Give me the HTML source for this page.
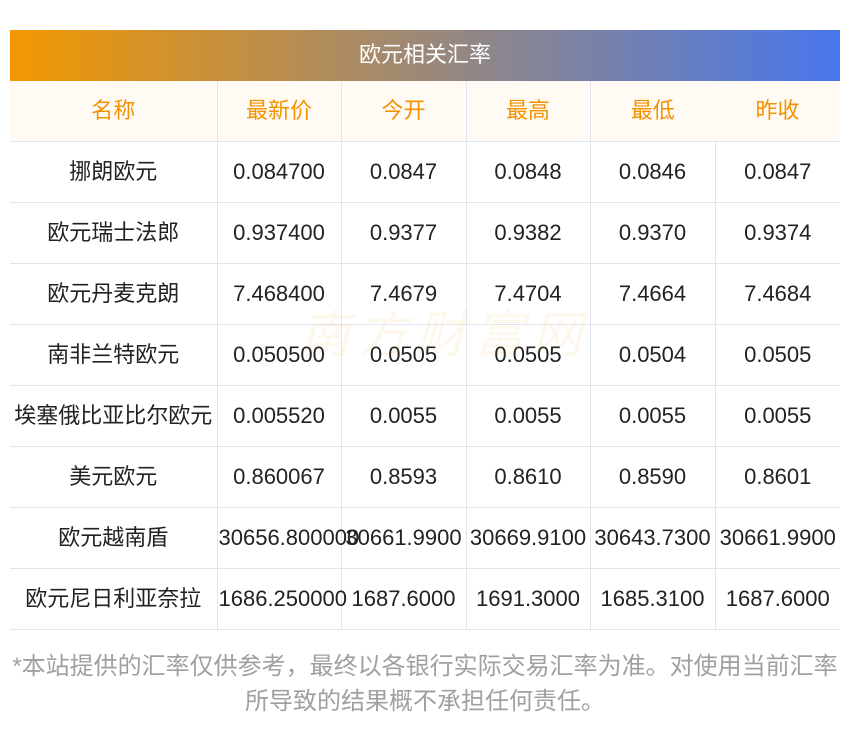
<!DOCTYPE html>
<html><head><meta charset="utf-8"><style>
body{margin:0;width:850px;height:733px;background:#fff;font-family:"Liberation Sans","Noto Sans CJK SC",sans-serif;position:relative;overflow:hidden}
.bar{position:absolute;left:10px;top:30px;width:830px;height:51px;background:linear-gradient(90deg,#f39800,#8a8590 60%,#4877ec);color:#fff;font-size:22px;text-align:center;line-height:49px}
table{position:absolute;left:10px;top:81px;width:830px;border-collapse:collapse;table-layout:fixed}
td{height:60px;border-bottom:1px solid #e2e4ee;border-left:1px solid #e2e4ee;text-align:center;white-space:nowrap;font-size:22px;line-height:24px;color:#222;padding:0 1px;overflow:visible}
td:first-child{border-left:none}
tr.h td{background:#fffaf3;color:#f39200;height:60px}
tr.h td:last-child{border-left:none}
.note{position:absolute;left:0;top:649px;width:850px;text-align:center;color:#a0a0a0;font-size:24px;line-height:35px}
.wm{position:absolute;left:300px;top:295px;color:rgba(243,152,0,0.08);font-size:50px;font-style:italic;letter-spacing:8px}
</style></head><body>
<div class="bar">欧元相关汇率</div>
<table>
<colgroup><col style="width:207px"><col style="width:124px"><col style="width:125px"><col style="width:124px"><col style="width:125px"><col style="width:125px"></colgroup>
<tr class="h"><td>名称</td><td>最新价</td><td>今开</td><td>最高</td><td>最低</td><td>昨收</td></tr>
<tr><td>挪朗欧元</td><td>0.084700</td><td>0.0847</td><td>0.0848</td><td>0.0846</td><td>0.0847</td></tr>
<tr><td>欧元瑞士法郎</td><td>0.937400</td><td>0.9377</td><td>0.9382</td><td>0.9370</td><td>0.9374</td></tr>
<tr><td>欧元丹麦克朗</td><td>7.468400</td><td>7.4679</td><td>7.4704</td><td>7.4664</td><td>7.4684</td></tr>
<tr><td>南非兰特欧元</td><td>0.050500</td><td>0.0505</td><td>0.0505</td><td>0.0504</td><td>0.0505</td></tr>
<tr><td>埃塞俄比亚比尔欧元</td><td>0.005520</td><td>0.0055</td><td>0.0055</td><td>0.0055</td><td>0.0055</td></tr>
<tr><td>美元欧元</td><td>0.860067</td><td>0.8593</td><td>0.8610</td><td>0.8590</td><td>0.8601</td></tr>
<tr><td>欧元越南盾</td><td>30656.800000</td><td>30661.9900</td><td>30669.9100</td><td>30643.7300</td><td>30661.9900</td></tr>
<tr><td>欧元尼日利亚奈拉</td><td>1686.250000</td><td>1687.6000</td><td>1691.3000</td><td>1685.3100</td><td>1687.6000</td></tr>
</table>
<div class="wm">南方财富网</div>
<div class="note">*本站提供的汇率仅供参考，最终以各银行实际交易汇率为准。对使用当前汇率<br>所导致的结果概不承担任何责任。</div>
</body></html>
